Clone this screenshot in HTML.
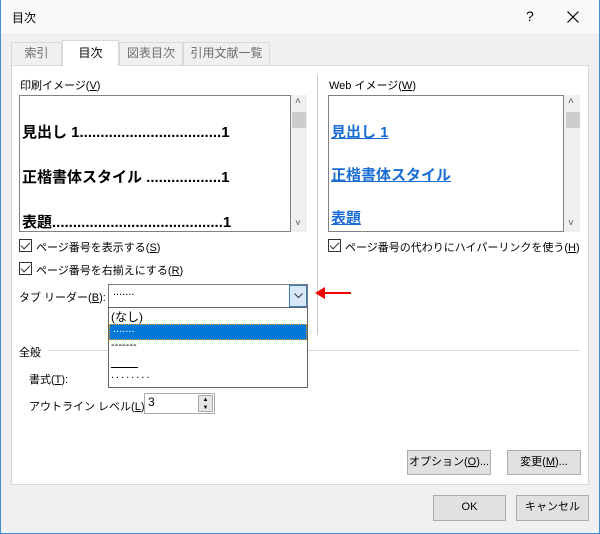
<!DOCTYPE html>
<html><head><meta charset="utf-8"><style>
*{box-sizing:border-box;margin:0;padding:0}
body{width:600px;height:534px;overflow:hidden;background:#f0f0f0;font-family:"Liberation Sans","Noto Sans CJK JP",sans-serif;font-size:11px;color:#000;position:relative}
.a{position:absolute;white-space:nowrap}
.win{left:0;top:0;width:600px;height:534px;border:1px solid #3c8fd8;border-top:none}
.title{left:1px;top:0;width:598px;height:33px;background:#f9f9f9}
.tab{top:42px;height:23px;border:1px solid #d9d9d9;border-bottom:none;background:#f0f0f0;color:#6d6d6d;font-size:12px;text-align:center;line-height:21px}
.panel{left:11px;top:65px;width:578px;height:420px;background:#fff;border:1px solid #d9d9d9}
.box{background:#fff;border:1px solid #828282}
.sb{background:#f0f0f0}
.thumb{background:#cdcdcd}
.btn{background:#e1e1e1;border:1px solid #adadad;text-align:center;line-height:23px;font-size:11px}
.cb{width:13px;height:13px;border:1px solid #333;background:#fff}
.cb:after{content:"";position:absolute;left:3px;top:0px;width:4px;height:8px;border:solid #333;border-width:0 1.5px 1.5px 0;transform:rotate(45deg)}
.pv{font-weight:bold;font-size:15px}
.lk{color:#1a6dd4;text-decoration:underline;font-weight:bold;font-size:15px}
u{text-decoration:underline}
</style></head><body>
<div class="a win"></div>
<div class="a title"></div>
<div class="a" style="left:12px;top:9px;font-size:12px">目次</div>
<div class="a" style="left:526px;top:8px;font-size:14px">?</div>
<svg class="a" style="left:567px;top:11px" width="12" height="12"><path d="M0.5 0.5L11.5 11.5M11.5 0.5L0.5 11.5" stroke="#000" stroke-width="1.2"/></svg>

<div class="a panel"></div>
<div class="a tab" style="left:11px;width:51px">索引</div>
<div class="a tab" style="left:62px;top:40px;height:26px;width:57px;background:#fff;color:#000;line-height:24px">目次</div>
<div class="a tab" style="left:119px;width:64px">図表目次</div>
<div class="a tab" style="left:183px;width:87px">引用文献一覧</div>

<div class="a" style="left:20px;top:77px">印刷イメージ(<u>V</u>)</div>
<div class="a box" style="left:19px;top:95px;width:272px;height:137px"></div>
<div class="a sb" style="left:291px;top:95px;width:16px;height:137px"></div>
<div class="a thumb" style="left:292px;top:112px;width:14px;height:16px"></div>
<div class="a" style="left:295px;top:96px;font-size:10px;color:#555">˄</div>
<div class="a" style="left:295px;top:218px;font-size:10px;color:#555">˅</div>
<div class="a pv" style="left:22px;top:121px">見出し 1..................................1</div>
<div class="a pv" style="left:22px;top:166px">正楷書体スタイル ..................1</div>
<div class="a pv" style="left:22px;top:211px">表題.........................................1</div>

<div class="a" style="left:317px;top:75px;width:1px;height:260px;background:#c8c8c8"></div>

<div class="a" style="left:329px;top:77px">Web イメージ(<u>W</u>)</div>
<div class="a box" style="left:328px;top:95px;width:236px;height:137px"></div>
<div class="a sb" style="left:564px;top:95px;width:16px;height:137px"></div>
<div class="a thumb" style="left:566px;top:112px;width:14px;height:16px"></div>
<div class="a" style="left:568px;top:96px;font-size:10px;color:#555">˄</div>
<div class="a" style="left:568px;top:218px;font-size:10px;color:#555">˅</div>
<div class="a lk" style="left:331px;top:121px">見出し 1</div>
<div class="a lk" style="left:331px;top:164px">正楷書体スタイル</div>
<div class="a lk" style="left:331px;top:207px">表題</div>

<div class="a cb" style="left:19px;top:239px"></div>
<div class="a" style="left:36px;top:239px">ページ番号を表示する(<u>S</u>)</div>
<div class="a cb" style="left:19px;top:262px"></div>
<div class="a" style="left:36px;top:262px">ページ番号を右揃えにする(<u>R</u>)</div>
<div class="a cb" style="left:328px;top:239px"></div>
<div class="a" style="left:345px;top:239px">ページ番号の代わりにハイパーリンクを使う(<u>H</u>)</div>

<div class="a" style="left:19px;top:289px">タブ リーダー(<u>B</u>):</div>
<div class="a" style="left:108px;top:284px;width:200px;height:24px;background:#fff;border:1px solid #7a7a7a"></div>
<div class="a" style="left:113px;top:286px">.......</div>
<div class="a" style="left:289px;top:285px;width:18px;height:22px;background:#d8e8f8;border:1px solid #3c7fc1"></div>
<svg class="a" style="left:294px;top:293px" width="9" height="6"><path d="M0.5 0.5L4.5 4.5L8.5 0.5" stroke="#333" fill="none"/></svg>
<div class="a" style="left:322px;top:292px;width:29px;height:2px;background:#e00"></div>
<svg class="a" style="left:315px;top:287px" width="10" height="12"><path d="M0 6L10 0L10 12Z" fill="#e00"/></svg>

<div class="a" style="left:19px;top:344px">全般</div>
<div class="a" style="left:48px;top:350px;width:532px;height:1px;background:#d9d9d9"></div>
<div class="a" style="left:29px;top:371px">書式(<u>T</u>):</div>
<div class="a" style="left:29px;top:398px">アウトライン レベル(<u>L</u>):</div>
<div class="a" style="left:144px;top:393px;width:71px;height:21px;background:#fff;border:1px solid #aaa"></div>
<div class="a" style="left:148px;top:395px;font-size:12px">3</div>
<div class="a" style="left:198px;top:395px;width:15px;height:17px;background:#e6e6e6;border:1px solid #aaa;font-size:6px;line-height:8px;text-align:center">▲<br>▼</div>

<div class="a" style="left:108px;top:307px;width:200px;height:81px;background:#fff;border:1px solid #646464"></div>
<div class="a" style="left:111px;top:308px;font-size:12px">(なし)</div>
<div class="a" style="left:109px;top:324px;width:198px;height:16px;background:#0078d7;border:1px dotted #f0a000"></div>
<div class="a" style="left:113px;top:323px;color:#fff">.......</div>
<div class="a" style="left:111px;top:339px">-------</div>
<div class="a" style="left:111px;top:367px;width:27px;height:1px;background:#000"></div>
<div class="a" style="left:111px;top:369px;letter-spacing:2px">........</div>

<div class="a btn" style="left:407px;top:450px;width:84px;height:25px">オプション(<u>O</u>)...</div>
<div class="a btn" style="left:507px;top:450px;width:74px;height:25px">変更(<u>M</u>)...</div>
<div class="a btn" style="left:433px;top:495px;width:73px;height:26px">OK</div>
<div class="a btn" style="left:516px;top:495px;width:73px;height:26px">キャンセル</div>
</body></html>
